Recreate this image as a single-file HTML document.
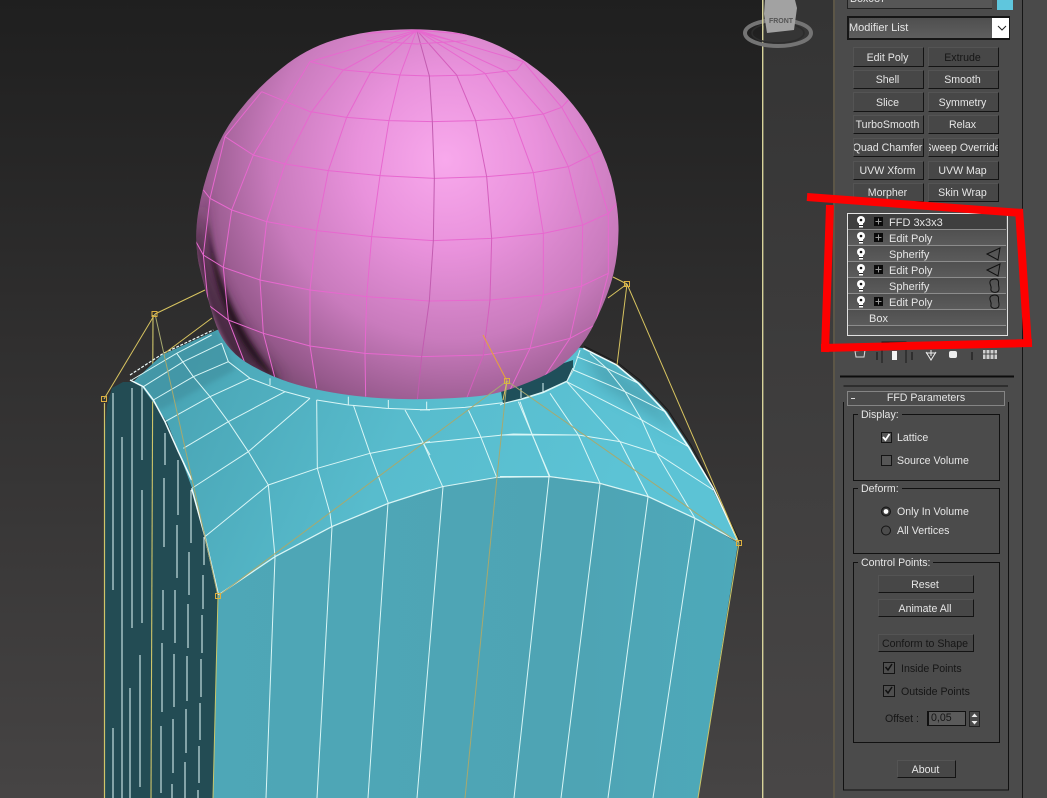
<!DOCTYPE html>
<html><head><meta charset="utf-8"><style>
html,body{margin:0;padding:0;background:#333}
#r{position:relative;width:1047px;height:798px;overflow:hidden;font-family:"Liberation Sans",sans-serif;font-size:10.600px;color:#e6e6e6;filter:blur(.35px)}
svg{position:absolute;left:0;top:0}
svg *{vector-effect:non-scaling-stroke}
.b{position:absolute;box-sizing:border-box;display:flex;align-items:center;justify-content:center;white-space:nowrap;overflow:hidden;background:#474747;border:1px solid;border-color:#545454 #141414 #141414 #545454;padding:1px 2px 0 0}
.t{position:absolute;white-space:nowrap;line-height:13px;margin-top:1px}
.d{color:#161616}
.g{position:absolute;box-sizing:border-box;border:1px solid #111}
.l{position:absolute;background:#4b4b4b;padding:0 3px;line-height:13px;white-space:nowrap;margin-top:1px}
.row{position:absolute;left:848px;width:158px;height:15px;border-bottom:1px solid #8c8c8c;background:linear-gradient(#505050,#5b5b5b);line-height:15px;font-size:11px}
.row span{position:absolute;left:41px;top:2px}
</style></head><body><div id="r">
<svg width="1047" height="798" viewBox="0 0 1047 798" style="z-index:1">
<defs>
<linearGradient id="bg" x1="0" y1="0" x2="0" y2="1"><stop offset="0" stop-color="#1f1f1f"/><stop offset="1" stop-color="#464444"/></linearGradient>
<linearGradient id="bg2" x1="0" y1="0" x2="0" y2="1"><stop offset="0" stop-color="#343434"/><stop offset="1" stop-color="#484646"/></linearGradient>
<radialGradient id="sp" gradientUnits="userSpaceOnUse" cx="455" cy="160" r="300" fx="445" fy="160"><stop offset="0" stop-color="#f8a9ec"/><stop offset=".3" stop-color="#e992dc"/><stop offset=".6" stop-color="#c97bbd"/><stop offset=".85" stop-color="#96598c"/><stop offset="1" stop-color="#6c4364"/></radialGradient>
<linearGradient id="fr" x1="0" y1="0" x2="1" y2="0"><stop offset="0" stop-color="#4ea7b7"/><stop offset=".7" stop-color="#4ea4b4"/><stop offset="1" stop-color="#4da9ba"/></linearGradient>
<linearGradient id="tp" gradientUnits="userSpaceOnUse" x1="200" y1="350" x2="600" y2="520"><stop offset="0" stop-color="#4aa6b6"/><stop offset=".5" stop-color="#58bccd"/><stop offset="1" stop-color="#5cc3d5"/></linearGradient>
<filter id="bl" x="-50%" y="-50%" width="200%" height="200%"><feGaussianBlur stdDeviation="7"/></filter>
<filter id="bl2" x="-50%" y="-50%" width="200%" height="200%"><feGaussianBlur stdDeviation="2.5"/></filter>
<clipPath id="spc"><path id="spo" d="M390,30 Q363,31 334,40 Q305,49 282,68 Q258,87 240,110 Q221,133 212,160 Q202,187 198,213.500 Q194,240 199,265 Q205,290 214,319 Q223,348 246.500,362.500 Q270,377 296.500,384.500 Q323,392 356.500,396 Q390,400 428.500,399 Q467,398 487,395 Q507,392 540,377.500 Q573,363 591,330 Q608,297 613.500,273.500 Q619,250 618.500,226.500 Q618,203 611,176.500 Q603,150 587,124 Q570,98 547,78 Q524,58 499,46 Q473,34 445,31 Q417,28 390,30Z"/></clipPath>
<clipPath id="topc"><path d="M218,595 L205,537 192,488 178,450 167,422 153,402 142,387 133,382 162,355 217,330 250,320 583,348 617,365 640,383 667,412 690,447 713,490 738,542 695,518 648,497 600,483 549,477 497,477 443,487 388,503 332,527 275,557Z"/></clipPath>
<g id="bulb"><circle cx="0" cy="-1" r="4" fill="#fff"/><rect x="-2" y="2" width="4" height="4.500" fill="#fff"/><circle cx="0" cy="-1" r="1.300" fill="#111"/><rect x="-2" y="4" width="4" height="1" fill="#222"/></g>
<g id="plus"><rect x="-4.500" y="-4.500" width="9" height="9" fill="#0a0a0a"/><path d="M-3,0H3M0,-3V3" stroke="#999" stroke-width="1"/></g>
</defs>
<rect width="763" height="798" fill="url(#bg)"/>
<rect x="763" width="70" height="798" fill="url(#bg2)"/>
<rect x="762" y="0" width="1.400" height="798" fill="#d6d29a"/>

<!-- viewcube -->
<ellipse cx="778" cy="33" rx="33" ry="13" fill="none" stroke="#747474" stroke-width="4"/>
<ellipse cx="778" cy="33" rx="26" ry="10" fill="none" stroke="#2c2c2c" stroke-width="1.500"/>
<path d="M765,0 L795,0 797,8 794,30 767,33 764,14Z" fill="#a2a2a2"/>
<text x="781" y="23" font-size="7" fill="#555" text-anchor="middle" font-weight="bold">FRONT</text>
<rect x="762" y="0" width="1.400" height="30" fill="#d6d29a"/>

<!-- side -->
<path d="M105,430 L107,405 112,388 123,382 133,382 142,387 153,402 167,422 178,450 192,488 205,537 218,596 213,798 105,798Z" fill="#234c54"/>
<g stroke="#e6fbfb" stroke-width="1" fill="none">
<path d="M113,393V590M113,728V798M122,437V798M132,388V628M130,688V798M142,387V460M142,490V623M140,655V787"/>
<path d="M165,433V465M164,478V547M163,590V630M162,643V712M161,726V793"/>
<path d="M178,460V515M177,525V578M175,590V643M174,654V707M173,719V773M172,784V798"/>
<path d="M191,490V543M189,552V595M188,604V648M187,656V701M186,709V753M185,762V798"/>
<path d="M204,537V565M203,575V609M202,615V653M201,659V697M200,703V740M199,746V783M198,790V798"/>
</g>
<path d="M104.500,403V798" stroke="#cfc56a" stroke-width="1.200"/>
<path d="M153,315L151,798" stroke="#cfc56a" stroke-width="1.100" fill="none"/>

<!-- top face -->
<path d="M218,595 L205,537 192,488 178,450 167,422 153,402 142,387 133,382 162,355 217,330 250,320 583,348 617,365 640,383 667,412 690,447 713,490 738,542 695,518 648,497 600,483 549,477 497,477 443,487 388,503 332,527 275,557Z" fill="url(#tp)"/>
<g clip-path="url(#topc)">
<path d="M133,382 L162,355 217,330 235,370 160,410Z" fill="#3f8e9d" opacity=".6" filter="url(#bl2)"/>
<path d="M580,345 L650,390 680,435 600,385Z" fill="#3f8e9d" opacity=".5" filter="url(#bl)"/>
</g>
<!-- front face -->
<path d="M218,595 L275,557 332,527 388,503 443,487 497,477 549,477 600,484 648,497 695,518 738,543 698,798 213,798Z" fill="url(#fr)"/>

<!-- top outline shadow right -->
<path d="M584,346 L618,363 641,381 668,410 691,445 714,488 739,540" stroke="#1a1a1a" stroke-width="1" fill="none"/>

<!-- grid -->
<g stroke="#d9f6f6" stroke-width="1" fill="none">
<g transform="translate(130,320) scale(.33333)">
<path d="M5,180 L140,100 245,45"/>
<path d="M40,200 L160,125 275,70"/>
<path d="M70,240 L190,170 295,125"/>
<path d="M105,305 L240,230 360,175"/>
<path d="M160,385 L295,305 465,215"/>
<path d="M187,504 L355,395 540,235"/>
<path d="M140,100 L190,170 240,230 295,305 355,395 415,495"/>
<path d="M275,70 L295,125 360,175 465,215 540,235"/>
<path d="M420,175V195"/>
<path d="M0,165 L100,100 250,30" stroke="#f0fdfd" stroke-width="1.200" stroke-dasharray="3 1.500"/>
<path d="M0,180 L40,200 70,240 105,305 145,395 185,480" stroke="#eefcfc" stroke-width="1.500"/>
</g>
<g transform="translate(90,270) scale(.33333)">
<path d="M680,390 L775,405 890,415 1020,420"/>
<path d="M345,800 L535,645 682,595 840,550 1020,515"/>
<path d="M385,975 L555,860 725,770 895,700 1020,660" stroke-width="1.300"/>
<path d="M535,645 L555,860"/>
<path d="M680,390 L682,595 720,730 725,770"/>
<path d="M790,405 L840,550 895,700"/>
<path d="M945,420 L1020,555"/>
<path d="M775,380V405M895,390V415M1010,395V420"/>
<path d="M305,655 L345,800 385,975" stroke-width="1.500" stroke="#eefcfc"/>
</g>
<g transform="translate(420,270) scale(.33333)">
<path d="M0,420 L135,412 250,398"/>
<path d="M0,520 L280,492 470,495"/>
<path d="M0,670 L68,650 230,622 388,620"/>
<path d="M10,520 L68,650"/>
<path d="M145,420 L180,495 230,622"/>
<path d="M300,395 L335,490 388,620"/>
</g>
<g transform="translate(500,340) scale(.33333)">
<path d="M0,195 L10,190 65,178 130,158 200,125 220,90 240,30"/>
<path d="M230,50 L320,85 415,130"/>
<path d="M220,90 L375,155 495,215"/>
<path d="M200,125 L425,240 565,320"/>
<path d="M0,285 L235,285 360,305 470,340 640,450"/>
<path d="M0,410 L150,410 300,430 445,470 585,535 715,605" stroke-width="1.300"/>
<path d="M55,185 L97,285 150,410"/>
<path d="M150,160 L235,285 300,430"/>
<path d="M200,125 L360,305 445,470"/>
<path d="M270,40 L320,85 375,155 425,240 470,340 585,535"/>
<path d="M250,25 L350,75 415,130 495,215 565,320 640,445 715,605" stroke-width="1.500" stroke="#f0fdfd"/>
</g>
<!-- front grid -->
<path d="M275,557 L266,798"/>
<path d="M332,527 L317,798"/>
<path d="M388,503 L368,798"/>
<path d="M443,487 L417,798"/>
<path d="M549,477 L514,798"/>
<path d="M600,484 L561,798"/>
<path d="M648,497 L608,798"/>
<path d="M695,518 L653,798"/>
</g>
<path d="M503,403.500 L521,399 543,392 567,381 573,370 573,360 500,385Z" fill="#1f4f5a"/>
<path d="M503,403.500 L521,399 543,392 567,381" stroke="#d9f6f6" stroke-width="1" fill="none"/>
<path d="M521,398V388M543,392V383M567,381L573,368" stroke="#d9f6f6" stroke-width="1"/>

<!-- sphere -->
<use href="#spo" fill="url(#sp)"/>
<g clip-path="url(#spc)">
<path d="M207,190 C196,235 215,300 282,382 L210,360 L190,250Z" fill="#3b2335" opacity=".75" filter="url(#bl)"/>
<path d="M207,195 C205,250 232,330 282,385 C245,360 212,300 208,230Z" fill="#1d1019" opacity=".9" filter="url(#bl2)"/>
<path d="M195,240 C198,280 215,330 236,360 L215,350 L195,290Z" fill="#a96e9c" opacity=".85" filter="url(#bl2)"/>
</g>
<g clip-path="url(#spc)">
<g transform="translate(190,20) scale(.33333)" fill="none" stroke="#e768cf" stroke-width="1">
<path d="M360,125 L460,150 630,165 718,168 850,165 980,150 1000,125"/>
<path d="M215,215 L360,275 470,292 597,302 727,305 857,302 970,295 1060,282 1115,262 1135,240"/>
<path d="M105,350 L190,405 285,432 415,452 570,467 733,475 890,470 1030,458 1135,440 1235,390"/>
<path d="M40,510 L60,535 125,570 230,605 380,632 545,650 730,662 905,655 1060,640 1178,615 1255,580 1280,550"/>
<path d="M15,660 L40,705 100,742 210,780 360,810 530,830 718,843 900,840 1060,825 1175,798 1255,760"/>
<path d="M55,855 L115,900 220,940 360,978 525,1000 695,1010 880,1005 1020,985 1140,955 1215,915"/>
<path d="M680,30 L718,168 727,305 733,475 730,662 718,843 695,1010 682,1140" stroke="#c25cb0"/>
<path d="M680,30 L630,165 597,302 570,467 545,650 530,830 525,1000 527,1130"/>
<path d="M680,30 L540,160 470,292 415,452 380,632 360,810 360,978 380,1105"/>
<path d="M680,30 L460,150 365,275 285,432 230,605 210,780 220,940 255,1075"/>
<path d="M680,30 L360,125 190,405 125,570 100,742 115,900 165,1030"/>
<path d="M215,215 L105,350 60,535 40,705 55,855 100,985"/>
<path d="M680,30 L800,165 857,302 890,470 905,655 900,840 880,1005 830,1135" stroke="#d45fbd"/>
<path d="M680,30 L885,160 970,295 1030,458 1060,640 1060,825 1020,985 960,1110"/>
<path d="M680,30 L950,155 1060,282 1135,440 1178,615 1175,798 1140,955 1050,1090"/>
<path d="M680,30 L1000,125 1115,262 1205,420 1255,580 1255,760 1215,915"/>
<path d="M530,40 L680,30 850,45 M600,60L680,35 780,60 M530,62 L680,72 830,62"/>
</g></g>

<!-- lattice -->
<g fill="none" stroke-width="1">
<path d="M104,399L155,314M155,314L205,290M165,353L212,318M627,284L739,543M627,284L617,365M627,284L613,277M627,284L608,298" stroke="#d8c460"/>
<path d="M155,314L205,537L218,596M218,596L507,381M507,381L739,543M507,381L497,477L465,798" stroke="#a7a96f"/>
<path d="M507,381L483,335" stroke="#e6a23c"/>
<path d="M218,596L213,798M739,543L698,798" stroke="#c9c66a"/>
<path d="M507,381L503,400" stroke="#d8c460"/>
<g stroke="#dcb040" fill="none">
<rect x="101.500" y="396.500" width="5" height="5"/><rect x="152" y="311.500" width="5" height="5"/><rect x="215.500" y="593.500" width="5" height="5"/><rect x="504.500" y="378.500" width="5" height="5"/><rect x="624.500" y="281.500" width="5" height="5"/><rect x="736.500" y="540.500" width="5" height="5"/>
</g>
</g>

<!-- panel -->
<rect x="833" y="0" width="214" height="798" fill="#4b4b4b"/>
<rect x="833" y="0" width="2" height="798" fill="#5c5647"/>
<rect x="1022" y="0" width="1" height="798" fill="#161616"/>
<rect x="1023" y="0" width="24" height="798" fill="#4a4a4a"/>
</svg>

<div style="position:absolute;inset:0;z-index:2">
<div class="t" style="left:847px;top:-2px;width:145px;height:10px;background:#565656;border-bottom:1px solid #222;border-left:1px solid #222;line-height:5px;padding-left:2px;overflow:hidden;box-sizing:border-box"><span style="position:relative;top:-2px">Box087</span></div>
<div style="position:absolute;left:997px;top:0;width:16px;height:10px;background:#5fc6dd"></div>
<div style="position:absolute;left:847px;top:16px;width:163px;height:24px;box-sizing:border-box;border:2px solid #161616;background:linear-gradient(#4f4f4f,#5e5e5e);line-height:21px;padding-left:0;font-size:11px">Modifier List</div>
<div style="position:absolute;left:992px;top:18px;width:17px;height:20px;background:#fff"></div>
<svg width="1047" height="798" style="pointer-events:none"><path d="M998,26l4,4 4,-4" fill="none" stroke="#222" stroke-width="1"/></svg>

<div class="b" style="left:853px;top:47px;width:71px;height:20px">Edit Poly</div>
<div class="b d" style="left:928px;top:47px;width:71px;height:20px">Extrude</div>
<div class="b" style="left:853px;top:70px;width:71px;height:19px">Shell</div>
<div class="b" style="left:928px;top:70px;width:71px;height:19px">Smooth</div>
<div class="b" style="left:853px;top:92px;width:71px;height:20px">Slice</div>
<div class="b" style="left:928px;top:92px;width:71px;height:20px">Symmetry</div>
<div class="b" style="left:853px;top:115px;width:71px;height:19px">TurboSmooth</div>
<div class="b" style="left:928px;top:115px;width:71px;height:19px">Relax</div>
<div class="b" style="left:853px;top:138px;width:71px;height:19px">Quad Chamfer</div>
<div class="b" style="left:928px;top:138px;width:71px;height:19px">Sweep Override</div>
<div class="b" style="left:853px;top:161px;width:71px;height:19px">UVW Xform</div>
<div class="b" style="left:928px;top:161px;width:71px;height:19px">UVW Map</div>
<div class="b" style="left:853px;top:183px;width:71px;height:19px">Morpher</div>
<div class="b" style="left:928px;top:183px;width:71px;height:19px">Skin Wrap</div>

<!-- stack -->
<div style="position:absolute;left:847px;top:213px;width:161px;height:123px;box-sizing:border-box;border:1px solid #e2e2e2;background:#555"></div>
<div class="row" style="top:214px;background:#3f3f3f"><span>FFD 3x3x3</span></div>
<div class="row" style="top:230px"><span>Edit Poly</span></div>
<div class="row" style="top:246px"><span>Spherify</span></div>
<div class="row" style="top:262px"><span>Edit Poly</span></div>
<div class="row" style="top:278px"><span>Spherify</span></div>
<div class="row" style="top:294px"><span>Edit Poly</span></div>
<div class="row" style="top:310px"><span style="left:21px">Box</span></div>
<div class="row" style="top:326px;height:9px;border-bottom:0"></div>
<svg width="1047" height="798">
<use href="#bulb" x="861" y="221"/><use href="#bulb" x="861" y="237"/><use href="#bulb" x="861" y="253"/><use href="#bulb" x="861" y="269"/><use href="#bulb" x="861" y="285"/><use href="#bulb" x="861" y="301"/>
<use href="#plus" x="878.500" y="221.500"/><use href="#plus" x="878.500" y="237.500"/><use href="#plus" x="878.500" y="269.500"/><use href="#plus" x="878.500" y="301.500"/>
<g fill="none" stroke="#111" stroke-width="1">
<path d="M987,254 L1000,248 L998,260Z"/><path d="M987,270 L1000,264 L998,276Z"/>
<path d="M991,280 C995,278 999,279 998.500,283 C998,286 1000,288 998.500,291 C996,293.500 990,292.500 991,288.500 C992,286 988,283 991,280Z"/>
<path d="M991,296 C995,294 999,295 998.500,299 C998,302 1000,304 998.500,307 C996,309.500 990,308.500 991,304.500 C992,302 988,299 991,296Z"/>
</g>
<!-- stack toolbar -->
<g fill="none">
<path d="M855,351 L865,350 864,357 856,357Z" stroke="#ddd" stroke-width="1"/>
<path d="M877,352V360M912,352V360M972,352V360" stroke="#111"/>
<path d="M882,363V342H906V363" stroke="#1a1a1a"/>
<rect x="892" y="351" width="5" height="9" fill="#f4f4f4"/>
<path d="M926,352L931,360 936,352M931,350V356M926,353H936" stroke="#eee"/>
<rect x="949" y="351" width="8" height="7" rx="2" fill="#eee"/>
<path d="M983,350h14v9h-14z" fill="#cfcfcf"/><path d="M986,350v9M990,350v9M994,350v9M983,354h14" stroke="#444"/>
<path d="M840,376.500H1014" stroke="#0d0d0d" stroke-width="2"/>
<rect x="847.500" y="391.500" width="157" height="14" stroke="#858585"/>
<path d="M843.500,402V790H1008.500V402M843.500,386H1008" stroke="#111"/>
<rect x="851" y="398" width="4" height="1" fill="#ddd"/>
</g>
</svg>
<div class="t" style="left:848px;top:391px;width:156px;text-align:center">FFD Parameters</div>

<div class="g" style="left:853px;top:414px;width:147px;height:67px"></div>
<div class="l" style="left:858px;top:408px">Display:</div>
<div class="t" style="left:897px;top:431px">Lattice</div>
<div class="t" style="left:897px;top:454px">Source Volume</div>

<div class="g" style="left:853px;top:488px;width:147px;height:66px"></div>
<div class="l" style="left:858px;top:482px">Deform:</div>
<div class="t" style="left:897px;top:505px">Only In Volume</div>
<div class="t" style="left:897px;top:524px">All Vertices</div>

<div class="g" style="left:853px;top:562px;width:147px;height:181px"></div>
<div class="l" style="left:858px;top:556px">Control Points:</div>
<div class="b" style="left:878px;top:575px;width:96px;height:18px">Reset</div>
<div class="b" style="left:878px;top:599px;width:96px;height:18px">Animate All</div>
<div class="b d" style="left:878px;top:634px;width:96px;height:18px">Conform to Shape</div>
<div class="t d" style="left:901px;top:662px">Inside Points</div>
<div class="t d" style="left:901px;top:685px">Outside Points</div>
<div class="t d" style="left:885px;top:712px">Offset :</div>
<div style="position:absolute;left:927px;top:711px;width:39px;height:15px;box-sizing:border-box;background:#5a5a5a;border:1px solid #111;border-left-width:2px;line-height:13px;padding-left:2px;color:#151515">0,05</div>
<div class="b" style="left:897px;top:760px;width:59px;height:18px">About</div>

<svg width="1047" height="798">
<rect x="881.500" y="432.500" width="10" height="10" fill="#555" stroke="#141414"/>
<path d="M883,437l2.500,3 4,-6" fill="none" stroke="#fff" stroke-width="1.800"/>
<rect x="881.500" y="455.500" width="10" height="10" fill="#565656" stroke="#141414"/>
<circle cx="886" cy="511.500" r="4.500" fill="#3a3a3a" stroke="#141414"/><circle cx="886" cy="511.500" r="2.400" fill="#fff"/>
<circle cx="886" cy="530.500" r="4.500" fill="#4c4c4c" stroke="#141414"/>
<rect x="883.500" y="662.500" width="11" height="11" fill="#4f4f4f" stroke="#141414"/>
<path d="M885.500,667l2.500,3 4,-6" fill="none" stroke="#111" stroke-width="1.500"/>
<rect x="883.500" y="685.500" width="11" height="11" fill="#4f4f4f" stroke="#141414"/>
<path d="M885.500,690l2.500,3 4,-6" fill="none" stroke="#111" stroke-width="1.500"/>
<rect x="969.500" y="711.500" width="10" height="15" fill="#4a4a4a" stroke="#222"/>
<path d="M974.500,713.500l-3,3.500h6zM974.500,724.500l-3,-3.500h6z" fill="#eee"/>
</svg>
</div>

<svg width="1047" height="798" style="z-index:3">
<path d="M807,197 L1022,213 M1019,209 L1028,347 M1032,343 L821,348 M825,352 L830,205" fill="none" stroke="#fe0000" stroke-width="8"/>
</svg>
</div></body></html>
